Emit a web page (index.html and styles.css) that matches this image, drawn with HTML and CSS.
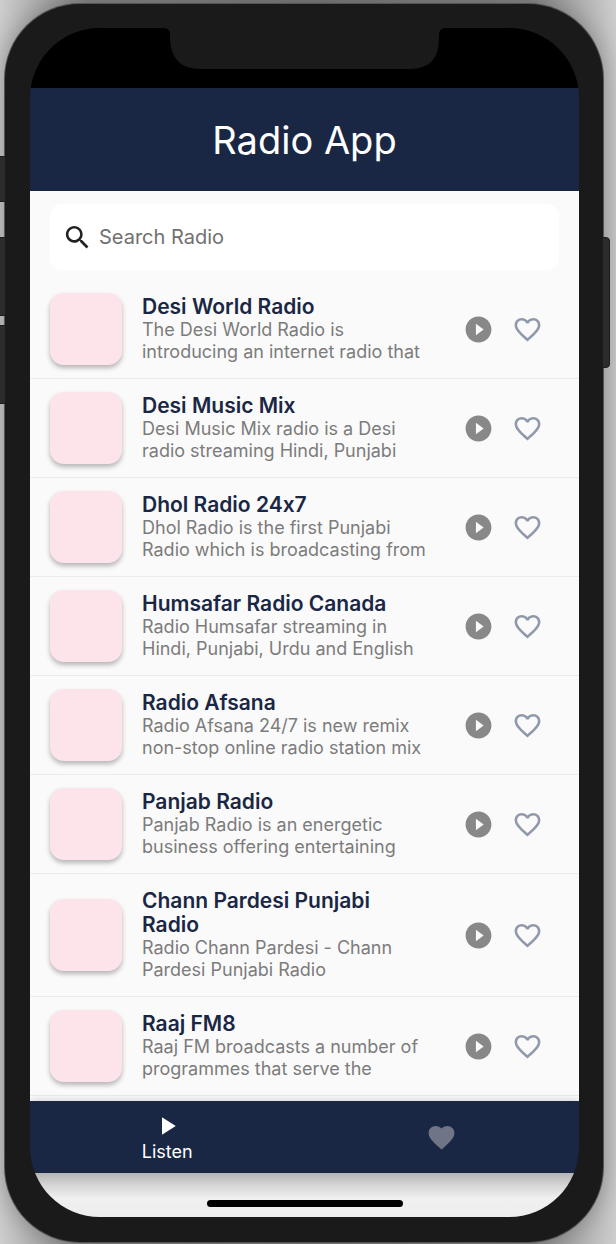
FILE: index.html
```html
<!DOCTYPE html>
<html lang="en">
<head>
<meta charset="utf-8">
<meta name="viewport" content="width=device-width, initial-scale=1">
<title>Radio App</title>
<link rel="stylesheet" href="styles.css">
</head>
<body>
<svg class="symbols" aria-hidden="true">
  <symbol id="play-circle" viewBox="0 0 24 24"><path d="M12 2C6.480 2 2 6.480 2 12s4.480 10 10 10 10-4.480 10-10S17.520 2 12 2zm-2 14.500v-9l6 4.500-6 4.500z"/></symbol>
  <symbol id="heart-outline" viewBox="0 0 24 24"><path d="M16.500 3c-1.740 0-3.410.81-4.500 2.090C10.910 3.810 9.240 3 7.500 3 4.420 3 2 5.420 2 8.500c0 3.780 3.400 6.860 8.550 11.540L12 21.350l1.450-1.320C18.600 15.360 22 12.280 22 8.500 22 5.420 19.580 3 16.500 3zm-4.400 15.550l-.1.1-.1-.1C7.140 14.240 4 11.390 4 8.500 4 6.500 5.500 5 7.500 5c1.540 0 3.040.99 3.570 2.360h1.870C13.460 5.990 14.960 5 16.500 5c2 0 3.500 1.500 3.500 3.500 0 2.890-3.140 5.740-7.900 10.050z"/></symbol>
  <symbol id="heart" viewBox="0 0 24 24"><path d="M12 21.350l-1.450-1.320C5.400 15.360 2 12.280 2 8.500 2 5.420 4.420 3 7.500 3c1.740 0 3.410.81 4.500 2.090C13.090 3.810 14.760 3 16.500 3 19.580 3 22 5.420 22 8.500c0 3.780-3.400 6.860-8.550 11.540L12 21.350z"/></symbol>
  <symbol id="play" viewBox="0 0 24 24"><path d="M8 5v14l11-7z"/></symbol>
  <symbol id="search" viewBox="0 0 24 24"><path d="M15.500 14h-.79l-.28-.27C15.410 12.590 16 11.110 16 9.500 16 5.910 13.090 3 9.500 3S3 5.910 3 9.500 5.910 16 9.500 16c1.610 0 3.090-.59 4.230-1.570l.27.28v.79l5 4.990L20.490 19l-4.990-5zm-6 0C7.010 14 5 11.990 5 9.500S7.010 5 9.500 5 14 7.010 14 9.500 11.990 14 9.500 14z"/></symbol>
</svg>
<div class="device">
  <span class="key key-mute"></span>
  <span class="key key-up"></span>
  <span class="key key-down"></span>
  <span class="key key-power"></span>
  <div class="screen">
    <div class="status"><svg class="notch" viewBox="0 0 282 41" aria-hidden="true"><path d="M0 0Q6 0 6 7V12Q8 41 36 41H246Q274 41 275 12V7Q275 0 282 0Z"/></svg></div>
    <header class="header"><h1 class="title">Radio App</h1></header>
    <main class="content">
      <label class="search">
        <svg class="search-icon" role="img" aria-label="Search"><use href="#search"/></svg>
        <input class="search-input" type="search" placeholder="Search Radio">
      </label>
      <ul class="stations">
        <li class="station"><div class="thumb"></div><div class="info"><h2 class="name">Desi World Radio</h2><p class="about">The Desi World Radio is<br>introducing an internet radio that</p></div><button class="action" aria-label="Play"><svg class="icon icon-play"><use href="#play-circle"/></svg></button><button class="action" aria-label="Favourite"><svg class="icon icon-heart"><use href="#heart-outline"/></svg></button></li>
        <li class="station"><div class="thumb"></div><div class="info"><h2 class="name">Desi Music Mix</h2><p class="about">Desi Music Mix radio is a Desi<br>radio streaming Hindi, Punjabi</p></div><button class="action" aria-label="Play"><svg class="icon icon-play"><use href="#play-circle"/></svg></button><button class="action" aria-label="Favourite"><svg class="icon icon-heart"><use href="#heart-outline"/></svg></button></li>
        <li class="station"><div class="thumb"></div><div class="info"><h2 class="name">Dhol Radio 24x7</h2><p class="about">Dhol Radio is the first Punjabi<br>Radio which is broadcasting from</p></div><button class="action" aria-label="Play"><svg class="icon icon-play"><use href="#play-circle"/></svg></button><button class="action" aria-label="Favourite"><svg class="icon icon-heart"><use href="#heart-outline"/></svg></button></li>
        <li class="station"><div class="thumb"></div><div class="info"><h2 class="name">Humsafar Radio Canada</h2><p class="about">Radio Humsafar streaming in<br>Hindi, Punjabi, Urdu and English</p></div><button class="action" aria-label="Play"><svg class="icon icon-play"><use href="#play-circle"/></svg></button><button class="action" aria-label="Favourite"><svg class="icon icon-heart"><use href="#heart-outline"/></svg></button></li>
        <li class="station"><div class="thumb"></div><div class="info"><h2 class="name">Radio Afsana</h2><p class="about">Radio Afsana 24/7 is new remix<br>non-stop online radio station mix</p></div><button class="action" aria-label="Play"><svg class="icon icon-play"><use href="#play-circle"/></svg></button><button class="action" aria-label="Favourite"><svg class="icon icon-heart"><use href="#heart-outline"/></svg></button></li>
        <li class="station"><div class="thumb"></div><div class="info"><h2 class="name">Panjab Radio</h2><p class="about">Panjab Radio is an energetic<br>business offering entertaining</p></div><button class="action" aria-label="Play"><svg class="icon icon-play"><use href="#play-circle"/></svg></button><button class="action" aria-label="Favourite"><svg class="icon icon-heart"><use href="#heart-outline"/></svg></button></li>
        <li class="station"><div class="thumb"></div><div class="info"><h2 class="name">Chann Pardesi Punjabi<br>Radio</h2><p class="about">Radio Chann Pardesi - Chann<br>Pardesi Punjabi Radio</p></div><button class="action" aria-label="Play"><svg class="icon icon-play"><use href="#play-circle"/></svg></button><button class="action" aria-label="Favourite"><svg class="icon icon-heart"><use href="#heart-outline"/></svg></button></li>
        <li class="station"><div class="thumb"></div><div class="info"><h2 class="name">Raaj FM8</h2><p class="about">Raaj FM broadcasts a number of<br>programmes that serve the</p></div><button class="action" aria-label="Play"><svg class="icon icon-play"><use href="#play-circle"/></svg></button><button class="action" aria-label="Favourite"><svg class="icon icon-heart"><use href="#heart-outline"/></svg></button></li>
      </ul>
    </main>
    <nav class="tabs">
      <button class="tab"><svg class="tab-icon"><use href="#play"/></svg>Listen</button>
      <button class="tab" aria-label="Favourites"><svg class="tab-heart"><use href="#heart"/></svg></button>
    </nav>
    <div class="home"><span class="home-bar"></span></div>
  </div>
</div>
</body>
</html>
```
FILE: styles.css
```css
* { box-sizing: border-box; }

body {
  margin: 0;
  padding: 4px 13px 2px 5px;
  background: linear-gradient(90deg, #cecece, #8c8c8c 14%, #808080 50%, #8c8c8c 86%, #cecece);
  font-family: Inter, "Liberation Sans", sans-serif;
  font-feature-settings: "calt" 0;
  overflow-x: hidden;
}

h1, h2, p, ul { margin: 0; padding: 0; }

button {
  border: 0;
  padding: 0;
  background: none;
  font: inherit;
  cursor: pointer;
}

.symbols { display: none; }

.device {
  position: relative;
  padding: 24px 24px 25px 25px;
  border-radius: 75px;
  background: #1a1a1a;
  box-shadow: 0 0 0 1px #555, 0 0 30px rgba(0, 0, 0, 0.35);
}

.key {
  position: absolute;
  left: -5px;
  width: 6px;
  background: #2c2c2c;
  border: 1px solid #1c1c1c;
  border-left: 0;
}
.key-mute { top: 152px; height: 46px; }
.key-up { top: 233px; height: 79px; }
.key-down { top: 321px; height: 79px; }
.key-power {
  top: 233px;
  left: auto;
  right: -7px;
  width: 8px;
  height: 131px;
  border: 1px solid #1c1c1c;
  border-radius: 0 4px 4px 0;
}

.screen {
  overflow: hidden;
  border-radius: 70px;
}

.status {
  display: flex;
  justify-content: center;
  height: 60px;
  background: #000;
}
.notch { width: 282px; height: 41px; fill: #1a1a1a; }

.header {
  display: flex;
  align-items: center;
  justify-content: center;
  height: 103px;
  background: #1a2744;
}
.title {
  color: #fff;
  font-size: 38px;
  font-weight: 400;
  line-height: 46px;
}

.content {
  display: flow-root;
  background: #fafafa;
}

.search {
  display: flex;
  align-items: center;
  gap: 6px;
  height: 66px;
  margin: 13px 20px 10px;
  padding: 0 12px;
  border-radius: 12px;
  background: #fff;
}
.search-icon { flex: none; width: 31px; height: 31px; fill: #222; }
.search-input {
  flex: 1;
  min-width: 0;
  border: 0;
  padding: 0;
  outline: 0;
  background: none;
  color: #222;
  font: 400 20px/24px Inter, "Liberation Sans", sans-serif;
}
.search-input::placeholder { color: #707070; opacity: 1; }

.stations { padding-bottom: 5px; list-style: none; }

.station {
  display: flex;
  align-items: center;
  padding: 13px 36px 13px 20px;
  border-bottom: 1px solid #ececec;
}
.thumb {
  flex: none;
  width: 72px;
  height: 72px;
  border-radius: 14px;
  background: #fde4ea;
  box-shadow: 0 3px 5px rgba(0, 0, 0, 0.28);
}
.info { flex: 1; min-width: 0; padding: 2px 0 2px 20px; }
.name {
  color: #1a2744;
  font-size: 21px;
  font-weight: 600;
  line-height: 24px;
}
.about {
  color: #7c7c7c;
  font-size: 18px;
  line-height: 22px;
  white-space: nowrap;
}
.action { flex: none; display: flex; margin-left: 18px; }
.icon { width: 31px; height: 31px; }
.icon-play { fill: #888; }
.icon-heart { fill: #9099ab; }

.tabs {
  display: flex;
  height: 72px;
  background: #1a2744;
  box-shadow: 0 0 8px rgba(0, 0, 0, 0.2);
}
.tab {
  flex: 1;
  display: flex;
  flex-direction: column;
  align-items: center;
  justify-content: center;
  color: #fff;
  font-size: 18px;
  line-height: 22px;
}
.tab-icon { width: 30px; height: 30px; fill: #fff; }
.tab-heart { width: 31px; height: 31px; fill: #6f7587; }

.home {
  display: flex;
  justify-content: center;
  align-items: flex-end;
  height: 44px;
  padding-bottom: 10px;
  background: linear-gradient(#b4b4b4, #d6d6d6 28%, #f0f0f0 58%, #ededed);
}
.home-bar { width: 196px; height: 7px; border-radius: 4px; background: #000; }
```
